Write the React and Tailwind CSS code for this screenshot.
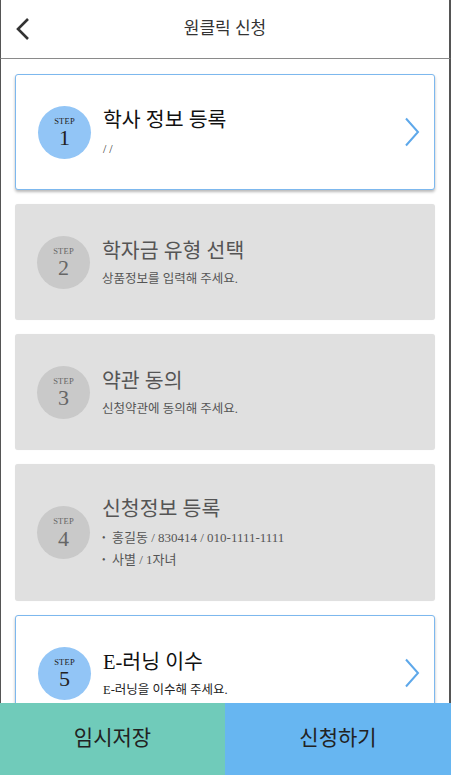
import React from "react";

const FONT = { fontFamily: '"Liberation Serif", "Noto Sans CJK KR", serif' };

function Circle({ n, active }) {
  return (
    <div
      className={`w-[53px] h-[53px] shrink-0 rounded-full flex flex-col items-center justify-center ${
        active ? "bg-[#92c5f6] text-[#222]" : "bg-[#c9c9c9] text-[#666]"
      }`}
    >
      <span className="text-[8.5px] leading-none tracking-[0.2px] mt-[2px]">STEP</span>
      <span className="text-[22px] leading-none mt-[2px]">{n}</span>
    </div>
  );
}

function Chevron() {
  return (
    <svg width="16" height="30" viewBox="0 0 16 30" className="shrink-0">
      <path d="M2 1.5 L14 15 L2 28.5" fill="none" stroke="#5ea8ea" strokeWidth="2" />
    </svg>
  );
}

function Card({ n, active, title, children, tall }) {
  return (
    <div
      className={`flex items-center rounded-[3px] pl-[22px] pr-[14px] ${
        tall ? "h-[137px]" : "h-[116px]"
      } ${
        active
          ? "bg-white border border-[#7db8ee] shadow-[0_2px_3px_rgba(0,0,0,0.28)]"
          : "bg-[#e0e0e0] shadow-[0_0_1px_rgba(0,0,0,0.08)]"
      }`}
    >
      <Circle n={n} active={active} />
      <div className="flex-1 ml-[12px]">
        <div
          className={`text-[20.5px] leading-[28px] ${active ? "text-[#111]" : "text-[#555]"}`}
        >
          {title}
        </div>
        {children}
      </div>
      {active && <Chevron />}
    </div>
  );
}

export default function App() {
  return (
    <div className="w-[451px] h-[775px] flex flex-col overflow-hidden bg-white" style={FONT}>
      <div className="h-[59px] shrink-0 flex items-center relative border-l border-r-2 border-l-[#555] border-r-[#555] border-b border-b-[#8a8a8a]">
        <button className="absolute left-[14px] top-[17px]">
          <svg width="16" height="24" viewBox="0 0 16 24">
            <path d="M13 2 L3 12 L13 22" fill="none" stroke="#333" strokeWidth="2.6" />
          </svg>
        </button>
        <div className="flex-1 text-center text-[17px] text-[#333]">원클릭 신청</div>
      </div>
      <div className="flex-1 overflow-hidden border-l border-r-2 border-[#555]">
        <div className="flex flex-col gap-[14px] pt-[15px] px-[14px]">
          <Card n="1" active title="학사 정보 등록">
            <div className="text-[12px] text-[#333] mt-[6px] leading-[18px]">/ /</div>
          </Card>
          <Card n="2" title="학자금 유형 선택">
            <div className="text-[12.5px] text-[#555] mt-[5px] leading-[18px]">
              상품정보를 입력해 주세요.
            </div>
          </Card>
          <Card n="3" title="약관 동의">
            <div className="text-[12.5px] text-[#555] mt-[5px] leading-[18px]">
              신청약관에 동의해 주세요.
            </div>
          </Card>
          <Card n="4" title="신청정보 등록" tall>
            <ul className="mt-[4px] text-[13px] text-[#555]">
              <li className="flex items-center h-[22px]">
                <span className="w-[10px] text-[10px]">•</span>
                <span>홍길동 / 830414 / 010-1111-1111</span>
              </li>
              <li className="flex items-center h-[22px]">
                <span className="w-[10px] text-[10px]">•</span>
                <span>사별 / 1자녀</span>
              </li>
            </ul>
          </Card>
          <Card n="5" active title="E-러닝 이수">
            <div className="text-[12.5px] text-[#222] mt-[5px] leading-[18px]">
              E-러닝을 이수해 주세요.
            </div>
          </Card>
        </div>
      </div>
      <div className="h-[72px] shrink-0 flex">
        <button className="w-[225px] bg-[#70cbba] text-[21px] text-[#222]">임시저장</button>
        <button className="flex-1 bg-[#67b6f1] text-[21px] text-[#222]">신청하기</button>
      </div>
    </div>
  );
}
